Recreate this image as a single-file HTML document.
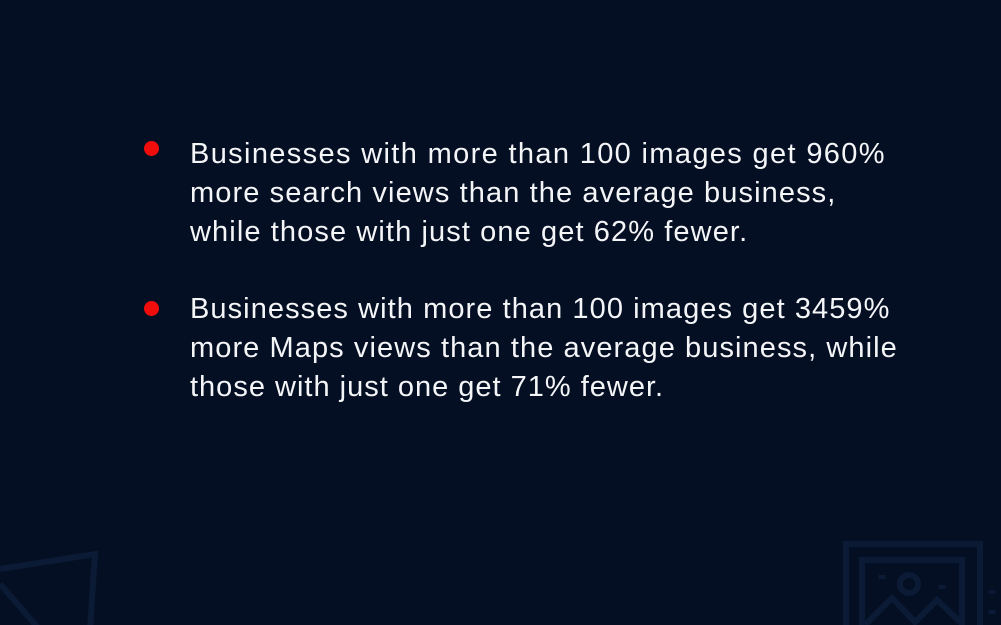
<!DOCTYPE html>
<html><head><meta charset="utf-8"><style>
html,body{margin:0;padding:0}
body{width:1001px;height:625px;background:#050f24;position:relative;overflow:hidden;font-family:"Liberation Sans",sans-serif}
.l{position:absolute;left:190px;color:#f4f5f7;font-size:29px;letter-spacing:1.1px;white-space:nowrap;line-height:1}
.d{position:absolute;width:15px;height:15px;border-radius:50%;background:#f20d0d}
</style></head><body>
<div class="d" style="left:144px;top:141px"></div>
<div class="l" style="top:140px;letter-spacing:1.35px">Businesses with more than 100 images get 960%</div>
<div class="l" style="top:179px">more search views than the average business,</div>
<div class="l" style="top:218px">while those with just one get 62% fewer.</div>
<div class="d" style="left:144px;top:301px"></div>
<div class="l" style="top:295px;letter-spacing:1.07px">Businesses with more than 100 images get 3459%</div>
<div class="l" style="top:334px;letter-spacing:1.08px">more Maps views than the average business, while</div>
<div class="l" style="top:373px;letter-spacing:1.0px">those with just one get 71% fewer.</div>
<svg width="1001" height="625" style="position:absolute;left:0;top:0" fill="none" stroke="#0b1a35" stroke-width="6">
<path d="M0 569 L95 554 L90 630"/>
<path d="M0 584 L40 630"/>
<rect x="846" y="544" width="134" height="100"/>
<rect x="862" y="560" width="100" height="80"/>
<circle cx="909" cy="584" r="9"/>
<path d="M865 625 L892 598 L915 622 L937 600 L960 622"/>
<path d="M882 575 v4 M942 585 v4 M992 590 v4 M992 610 v4" stroke-width="7"/>
</svg>
</body></html>
